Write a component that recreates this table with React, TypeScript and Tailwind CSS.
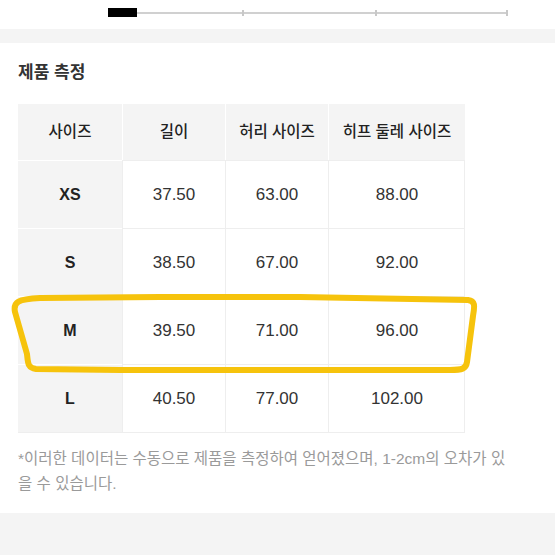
import React from 'react';

type Row = {
    size: string;
    length: string;
    waist: string;
    hip: string;
};

const rows: Row[] = [
    { size: 'XS', length: '37.50', waist: '63.00', hip: '88.00' },
    { size: 'S', length: '38.50', waist: '67.00', hip: '92.00' },
    { size: 'M', length: '39.50', waist: '71.00', hip: '96.00' },
    { size: 'L', length: '40.50', waist: '77.00', hip: '102.00' },
];

const headers = ['사이즈', '길이', '허리 사이즈', '히프 둘레 사이즈'];

function Slider() {
    return (
        <div className="h-[29px] pl-[108px] pt-[8px]">
            <div className="flex items-center h-[9px]">
                <div className="w-[29px] h-[9px] bg-black" />
                <div className="w-[105px] h-[2px] bg-[#d0d0d0]" />
                <div className="w-[2px] h-[6px] bg-[#c8c8c8]" />
                <div className="w-[131px] h-[2px] bg-[#d0d0d0]" />
                <div className="w-[2px] h-[6px] bg-[#c8c8c8]" />
                <div className="w-[129px] h-[2px] bg-[#d0d0d0]" />
                <div className="w-[2px] h-[6px] bg-[#c8c8c8]" />
            </div>
        </div>
    );
}

export default function App() {
    return (
        <div className="relative w-[555px] h-[555px] overflow-hidden bg-white font-['Liberation_Sans','Noto_Sans_CJK_KR',sans-serif]">
            <Slider />
            <div className="h-[14px] bg-[#f4f4f4]" />

            <div className="px-[18px]">
                <h2 className="pt-[18px] text-[17px] leading-[24px] font-bold text-[#333]">제품 측정</h2>

                {/* size table */}
                <div className="mt-[19px] w-[447px] grid grid-cols-[104px_103px_103px_137px] border-r border-b border-[#eeeeee]">
                    {headers.map((h, i) => (
                        <div
                            key={h}
                            className={`h-[56px] flex items-center justify-center bg-[#f4f4f4] text-[15.5px] font-medium text-[#222] ${i > 0 ? 'border-l border-white' : ''}`}
                        >
                            {h}
                        </div>
                    ))}
                    {rows.map(r => (
                        <React.Fragment key={r.size}>
                            <div className="h-[68px] flex items-center justify-center bg-[#f4f4f4] border-t border-white text-[16px] font-bold text-[#222]">
                                {r.size}
                            </div>
                            <div className="h-[68px] flex items-center justify-center border-t border-l border-[#eeeeee] text-[17px] text-[#333]">
                                {r.length}
                            </div>
                            <div className="h-[68px] flex items-center justify-center border-t border-l border-[#eeeeee] text-[17px] text-[#333]">
                                {r.waist}
                            </div>
                            <div className="h-[68px] flex items-center justify-center border-t border-l border-[#eeeeee] text-[17px] text-[#333]">
                                {r.hip}
                            </div>
                        </React.Fragment>
                    ))}
                </div>

                <p className="mt-[13px] pr-[27px] text-[15.5px] leading-[25px] text-[#9a9a9a]">
                    *이러한 데이터는 수동으로 제품을 측정하여 얻어졌으며, 1-2cm의 오차가 있을 수 있습니다.
                </p>
            </div>

            <div className="absolute left-0 right-0 bottom-0 h-[42px] bg-[#f4f4f4]" />

            {/* hand-drawn highlight around the M row */}
            <svg className="absolute left-0 top-0 pointer-events-none" width="555" height="555">
                <path
                    d="M15 312 C13 302 18 299 40 298 L160 297 L300 297 L468 300 C475 301 475 305 473 316 L467 362 C466 369 462 370 450 370 L120 370 L36 369 C28 368 28 364 27 354 L15 312 Z"
                    fill="none"
                    stroke="#f6c30c"
                    strokeWidth="6"
                    strokeLinejoin="round"
                />
            </svg>
        </div>
    );
}
